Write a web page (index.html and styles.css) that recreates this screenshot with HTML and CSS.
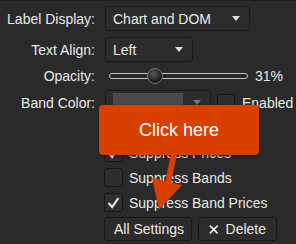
FILE: index.html
```html
<!doctype html>
<html>
<head>
<meta charset="utf-8">
<title>Band settings</title>
<link rel="stylesheet" href="styles.css">
</head>
<body>
<div class="panel">
    <div class="row first">
        <div class="label">Label Display:</div>
        <div class="select wide"><span>Chart and DOM</span><i class="caret"></i></div>
    </div>
    <div class="row">
        <div class="label">Text Align:</div>
        <div class="select narrow"><span>Left</span><i class="caret"></i></div>
    </div>
    <div class="row slim">
        <div class="label">Opacity:</div>
        <div class="slider">
            <div class="track"></div>
            <div class="thumb" style="left: 38px"></div>
        </div>
        <div class="value">31%</div>
    </div>
    <div class="row">
        <div class="label">Band Color:</div>
        <div class="select color"><span class="swatch"></span><i class="caret dim"></i></div>
        <div class="check"></div>
        <div class="text">Enabled</div>
    </div>

    <div class="options">
        <div class="option">
            <div class="check on"><svg viewBox="0 0 19 19"><polyline points="4,10 8,14.5 15,4.5"/></svg></div>
            <div class="text">Suppress Prices</div>
        </div>
        <div class="option">
            <div class="check"></div>
            <div class="text">Suppress Bands</div>
        </div>
        <div class="option">
            <div class="check on"><svg viewBox="0 0 19 19"><polyline points="4,10 8,14.5 15,4.5"/></svg></div>
            <div class="text">Suppress Band Prices</div>
        </div>
        <div class="buttons">
            <div class="button">All Settings</div>
            <div class="button"><svg class="x" viewBox="0 0 11 11"><path d="M1,1 L10,10 M10,1 L1,10"/></svg>Delete</div>
        </div>
    </div>
</div>

<div class="callout">Click here</div>
<svg class="arrow" viewBox="0 0 296 244">
    <line x1="175" y1="148" x2="168" y2="182"/>
    <polygon points="152,177 182,184 159,209"/>
</svg>
</body>
</html>
```

FILE: styles.css
```css
body{
    margin: 0;
    width: 296px;
    height: 244px;
    overflow: hidden;
    position: relative;
    background-color: #2a2a2a;
    border-top: 1px solid #1f1f1f;
    box-sizing: border-box;
    color: #e8e8e8;
    font-family: "Liberation Sans", Arial, sans-serif;
    font-size: 14px;
}

.row{
    display: flex;
    align-items: center;
    gap: 10px;
    height: 25px;
    margin-top: 6px;
    white-space: nowrap;
}
.row.first{
    margin-top: 5px;
}
.row.slim{
    height: 22px;
    margin-top: 3px;
    gap: 14px;
}
.row.slim + .row{
    margin-top: 3px;
}
.label{
    width: 95px;
    flex-shrink: 0;
    text-align: right;
}

.select{
    display: flex;
    align-items: center;
    justify-content: space-between;
    box-sizing: border-box;
    height: 25px;
    padding: 0 9px 0 7px;
    border: 1px solid #181818;
    border-radius: 3px;
    background-color: #2c2c2c;
    flex-shrink: 0;
}
.select.wide{ width: 145px; }
.select.narrow{ width: 88px; }
.select.color{
    width: 106px;
    align-items: flex-start;
    padding-top: 2px;
}
.caret{
    width: 0;
    height: 0;
    border-left: 4px solid transparent;
    border-right: 4px solid transparent;
    border-top: 5px solid #dcdcdc;
}
.caret.dim{
    margin-top: 7px;
    border-top-color: #777;
}
.swatch{
    display: block;
    width: 70px;
    height: 20px;
    background-color: #4a4a4a;
}

.slider{
    position: relative;
    width: 139px;
    height: 16px;
}
.track{
    position: absolute;
    left: 0;
    right: 0;
    top: 5px;
    height: 6px;
    box-sizing: border-box;
    border: 1px solid #c4c4c4;
    border-radius: 3px;
    background-color: #262626;
}
.thumb{
    position: absolute;
    top: 0;
    width: 16px;
    height: 16px;
    box-sizing: border-box;
    border: 1px solid #7a7a7a;
    border-radius: 50%;
    background: radial-gradient(circle at 40% 35%, #5a5a5a, #151515 70%);
}
.value{
    margin-left: -7px;
}

.check{
    width: 19px;
    height: 19px;
    box-sizing: border-box;
    border: 1px solid #161616;
    border-radius: 3px;
    background-color: #2e2e2e;
    flex-shrink: 0;
}
.check svg{
    display: block;
    width: 17px;
    height: 17px;
    fill: none;
    stroke: #e4e4e4;
    stroke-width: 2.4;
}
.row .check{
    margin-left: -4px;
    margin-top: 4px;
    align-self: flex-start;
    width: 18px;
}
.row .check + .text{
    margin-left: -3px;
}

.options{
    margin: 25px 0 0 104px;
}
.option{
    display: flex;
    align-items: center;
    gap: 6px;
    height: 25px;
}
.buttons{
    display: flex;
    gap: 6px;
    margin-top: 2px;
}
.button{
    display: flex;
    align-items: center;
    gap: 7px;
    box-sizing: border-box;
    height: 24px;
    padding: 0 10px;
    border: 1px solid #171717;
    border-radius: 3px;
    background-color: #2c2c2c;
}
.button:first-child{ width: 88px; padding: 0 0 0 9px; }
.button + .button{ width: 79px; }
.x{
    width: 11px;
    height: 11px;
    fill: none;
    stroke: #e8e8e8;
    stroke-width: 2;
}

.callout{
    position: absolute;
    left: 99px;
    top: 104px;
    width: 160px;
    height: 50px;
    line-height: 50px;
    border-radius: 4px;
    background-color: #d83f00;
    box-shadow: 0 1px 3px rgba(0,0,0,0.5);
    color: #fff;
    font-size: 18px;
    text-align: center;
}
.arrow{
    position: absolute;
    left: 0;
    top: 0;
    width: 296px;
    height: 244px;
}
.arrow line{
    stroke: #d83f00;
    stroke-width: 6;
}
.arrow polygon{
    fill: #d83f00;
}
```
